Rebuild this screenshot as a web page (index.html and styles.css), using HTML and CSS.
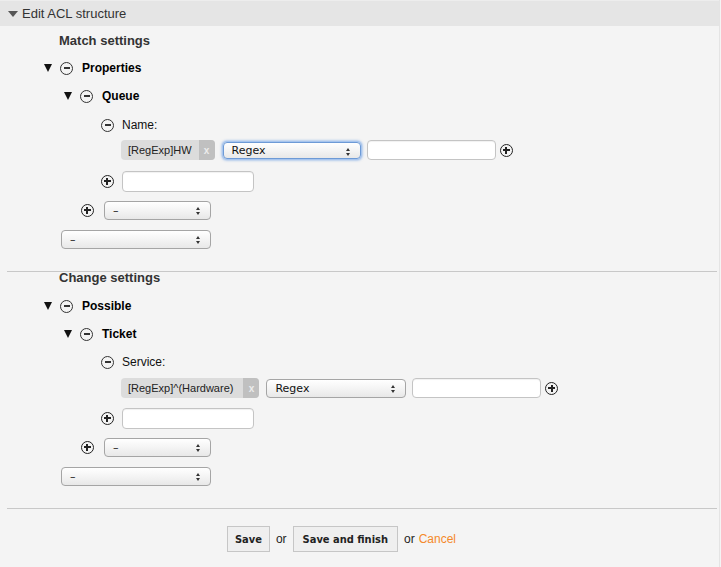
FILE: index.html
```html
<!DOCTYPE html>
<html>
<head>
<meta charset="utf-8">
<link rel="stylesheet" href="styles.css">
</head>
<body>
<div class="panel">
  <div class="header">
    <svg class="hdr-tri" width="10" height="6" viewBox="0 0 10 6"><path d="M0 0 L10 0 L5 6 Z" fill="#555"/></svg>
    <span>Edit ACL structure</span>
  </div>

  <div class="section">
    <div class="title t-first">Match settings</div>
    <div class="row lv1 r-a"><span class="tri"></span><span class="minus"></span><b>Properties</b></div>
    <div class="row lv2 r-b"><span class="tri"></span><span class="minus"></span><b>Queue</b></div>
    <div class="row lv3 r-c"><span class="minus"></span><span class="lbl">Name:</span></div>
    <div class="row lv4 r-d">
      <span class="tag"><span class="tag-text">[RegExp]HW</span><span class="tag-x">x</span></span>
      <span class="select sel-mid focus"><span class="sel-text">Regex</span><span class="arrows"></span></span>
      <span class="input inp-val"></span>
      <span class="plus"></span>
    </div>
    <div class="row lv3 r-e"><span class="plus"></span><span class="input inp-new"></span></div>
    <div class="row lv2 r-f"><span class="plus"></span><span class="select sel-sm"><span class="sel-text">–</span><span class="arrows"></span></span></div>
    <div class="row lv1b r-g"><span class="select sel-lg"><span class="sel-text">–</span><span class="arrows"></span></span></div>
  </div>

  <div class="sep"></div>

  <div class="section">
    <div class="title t-second">Change settings</div>
    <div class="row lv1 r-a2"><span class="tri"></span><span class="minus"></span><b>Possible</b></div>
    <div class="row lv2 r-b2"><span class="tri"></span><span class="minus"></span><b>Ticket</b></div>
    <div class="row lv3 r-c2"><span class="minus"></span><span class="lbl">Service:</span></div>
    <div class="row lv4 r-d2">
      <span class="tag"><span class="tag-text">[RegExp]^(Hardware)</span><span class="tag-x">x</span></span>
      <span class="select sel-mid"><span class="sel-text">Regex</span><span class="arrows"></span></span>
      <span class="input inp-val"></span>
      <span class="plus"></span>
    </div>
    <div class="row lv3 r-e2"><span class="plus"></span><span class="input inp-new"></span></div>
    <div class="row lv2 r-f2"><span class="plus"></span><span class="select sel-sm"><span class="sel-text">–</span><span class="arrows"></span></span></div>
    <div class="row lv1b r-g2"><span class="select sel-lg"><span class="sel-text">–</span><span class="arrows"></span></span></div>
  </div>

  <div class="sep sep2"></div>

  <div class="actions">
    <button class="btn btn-save">Save</button>
    <span class="or">or</span>
    <button class="btn">Save and finish</button>
    <span class="or">or</span>
    <a class="cancel" href="#">Cancel</a>
  </div>
</div>
</body>
</html>
```

FILE: styles.css
```css
html, body {
  margin: 0;
  padding: 0;
  background: #f4f4f4;
}
body {
  font-family: "Liberation Sans", Arial, sans-serif;
  font-size: 12px;
  color: #000;
}
.panel {
  width: 720px;
  height: 567px;
  box-sizing: border-box;
  border-right: 1px solid #e4e4e4;
}
.header {
  height: 26px;
  box-sizing: border-box;
  background: #e5e5e5;
  border-top: 1px solid #ededed;
  display: flex;
  align-items: center;
  padding-left: 8px;
  font-size: 13px;
  color: #333;
}
.hdr-tri {
  margin-right: 4px;
  margin-top: 1px;
}
.title {
  font-weight: bold;
  font-size: 13px;
  color: #333;
  padding-left: 59px;
  height: 20px;
  line-height: 20px;
}
.t-first { margin-top: 5px; }
.t-second { margin-top: -2px; height: 16px; line-height: 16px; }

.row {
  display: flex;
  align-items: center;
  height: 20px;
}
.row b { font-weight: bold; font-size: 12px; }
.lv1 { padding-left: 44px; }
.lv2 { padding-left: 64px; }
.lv3 { padding-left: 101px; }
.lv4 { padding-left: 121px; }
.lv1b { padding-left: 61px; }
.lv2.r-f, .lv2.r-f2 { padding-left: 81px; }

.r-a { margin-top: 7px; }
.r-b { margin-top: 8px; }
.r-c { margin-top: 9px; }
.r-d { margin-top: 5px; }
.r-e { margin-top: 11px; height: 21px; }
.r-f { margin-top: 9px; height: 19px; }
.r-g { margin-top: 10px; height: 19px; }

.r-a2 { margin-top: 10px; }
.r-b2 { margin-top: 8px; }
.r-c2 { margin-top: 8px; }
.r-d2 { margin-top: 6px; }
.r-e2 { margin-top: 10px; height: 21px; }
.r-f2 { margin-top: 9px; height: 19px; }
.r-g2 { margin-top: 10px; height: 19px; }

.tri {
  width: 0;
  height: 0;
  border-left: 4.5px solid transparent;
  border-right: 4.5px solid transparent;
  border-top: 8px solid #111;
  margin-right: 8px;
}
.minus, .plus {
  width: 13px;
  height: 13px;
  box-sizing: border-box;
  border: 1.3px solid #333;
  border-radius: 50%;
  position: relative;
  flex: none;
  margin-right: 9px;
}
.minus::before, .plus::before, .plus::after {
  content: "";
  position: absolute;
  background: #333;
}
.minus::before {
  left: 2.5px; right: 2.5px; top: 4.8px; height: 1.3px;
}
.plus { border-width: 1.4px; border-color: #222; }
.plus::before {
  left: 2px; right: 2px; top: 4.3px; height: 2px; background: #222;
}
.plus::after {
  top: 2px; bottom: 2px; left: 4.3px; width: 2px; background: #222;
}
.lbl { margin-left: -1px; color: #111; }
.lv3 .plus { margin-right: 8px; }
.r-f .plus, .r-f2 .plus { margin-right: 10px; }

.tag {
  display: flex;
  align-items: stretch;
  height: 20px;
  border-radius: 4px;
  overflow: hidden;
  background: #dcdcdc;
  font-size: 11px;
  color: #222;
  margin-right: 7px;
}
.tag-text {
  padding: 0 7px 0 7px;
  display: flex;
  align-items: center;
}
.tag-x {
  width: 16px;
  background: #c0c0c0;
  color: #ececec;
  font-weight: bold;
  font-size: 10px;
  display: flex;
  align-items: center;
  justify-content: center;
}
.r-d2 .tag-text { padding-right: 10px; }

.select {
  box-sizing: border-box;
  height: 19px;
  border: 1px solid #a5a5a5;
  border-radius: 4px;
  background: linear-gradient(#ffffff, #f4f4f4 50%, #e8e8e8);
  display: flex;
  align-items: center;
  position: relative;
  font-family: "DejaVu Sans", sans-serif;
  font-size: 11px;
  color: #111;
  flex: none;
}
.sel-text { padding-left: 8px; }
.arrows {
  position: absolute;
  right: 9px;
  top: 5px;
  width: 5px;
  height: 8px;
}
.arrows::before, .arrows::after {
  content: "";
  position: absolute;
  left: 0;
  border-left: 2.5px solid transparent;
  border-right: 2.5px solid transparent;
}
.arrows::before { top: 0; border-bottom: 3px solid #333; }
.arrows::after { bottom: 0; border-top: 3px solid #333; }
.sel-mid { width: 140px; }
.sel-sm { width: 107px; }
.sel-lg { width: 150px; }
.sel-mid .sel-text { padding-left: 8px; }
.focus {
  border-color: #6d9ad6;
  box-shadow: 0 0 0 1px #a7c5ee, 0 0 2px 2px rgba(120,165,230,0.5);
  height: 17px;
  width: 138px;
  margin: 0 1px;
}
.focus + .input { margin-left: 5px; }

.input {
  box-sizing: border-box;
  height: 20px;
  background: #fff;
  border: 1px solid #c4c4c4;
  border-radius: 4px;
  box-shadow: inset 0 1px 1px rgba(0,0,0,0.06);
  flex: none;
}
.inp-val { width: 129px; margin-left: 6px; margin-right: 4px; }
.inp-new { width: 132px; height: 21px; }
.r-d .plus, .r-d2 .plus { margin-right: 0; }

.sep {
  height: 1px;
  background: #c8c8c8;
  margin: 22px 2px 0 7px;
}
.sep2 { margin-top: 22px; }

.actions {
  margin-top: 17px;
  display: flex;
  align-items: center;
  justify-content: center;
  padding-right: 36px;
}
.btn {
  height: 26px;
  box-sizing: border-box;
  border: 1px solid #c6c6c6;
  background: #efefef;
  font-family: "DejaVu Sans Condensed", "DejaVu Sans", sans-serif;
  font-stretch: condensed;
  font-size: 11px;
  font-weight: bold;
  color: #222;
  padding: 0 9px;
  border-radius: 0;
  margin: 0;
}
.btn-save { padding: 0 7px; }
.or {
  color: #222;
  margin: 0 6px;
  font-size: 12px;
}
.cancel {
  color: #f5892a;
  text-decoration: none;
  font-size: 12px;
  margin-left: -2px;
}
```
